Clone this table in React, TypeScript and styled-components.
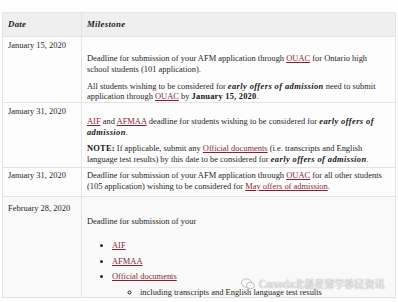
import React from "react";
import styled, { createGlobalStyle } from "styled-components";

const Global = createGlobalStyle`
  html, body { margin: 0; padding: 0; background: #fefefe; }
  body { width: 398px; height: 302px; overflow: hidden; font-family: "Liberation Serif", serif; color: #262626; }
`;

const Page = styled.div`
  position: relative;
  padding: 12px 2px 0 2px;
  width: 398px;
  height: 302px;
  box-sizing: border-box;
  overflow: hidden;
`;

const Table = styled.table`
  width: 394px;
  border-collapse: collapse;
  font-family: "Liberation Serif", serif;
  font-size: 8.45px;
  line-height: 10.5px;
  color: #262626;
  table-layout: fixed;
`;

const HeadCell = styled.th<{ $w?: number }>`
  background: #efefef;
  text-align: left;
  font-weight: 700;
  font-style: italic;
  font-size: 8.8px;
  letter-spacing: 0.3px;
  color: #1a1a1a;
  padding: 0 5px;
  height: 24px;
  box-sizing: border-box;
  border: 1px solid #e4e4e4;
  ${(p) => (p.$w ? `width: ${p.$w}px;` : "")}
`;

const Row = styled.tr<{ $shade?: boolean }>`
  background: ${(p) => (p.$shade ? "#f9f9f9" : "#fdfdfd")};
`;

const DateCell = styled.td<{ $top?: number }>`
  vertical-align: top;
  padding: ${(p) => p.$top ?? 3}px 5px 0 5px;
  border: 1px solid #e4e4e4;
  white-space: nowrap;
`;

const MileCell = styled.td<{ $bottom?: number }>`
  vertical-align: top;
  padding: 3px 5px ${(p) => p.$bottom ?? 0}px 5px;
  border: 1px solid #e4e4e4;
`;

const Para = styled.p<{ $top?: number }>`
  margin: ${(p) => p.$top ?? 0}px 0 0 0;
`;

const Emph = styled.b`
  font-style: italic;
  letter-spacing: 0.4px;
  color: #161616;
`;

const Strong = styled.b`
  letter-spacing: 0.2px;
  color: #161616;
`;

const Link = styled.a`
  color: #8a1f33;
  text-decoration: underline;
`;

const List = styled.ul<{ $nested?: boolean }>`
  margin: ${(p) => (p.$nested ? "5px 0 0 0" : "13.5px 0 0 0")};
  padding-left: ${(p) => (p.$nested ? "28px" : "25px")};
  list-style-type: ${(p) => (p.$nested ? "circle" : "disc")};
`;

const Item = styled.li<{ $first?: boolean }>`
  margin-top: ${(p) => (p.$first ? 0 : 5)}px;
`;

const Watermark = styled.div`
  position: absolute;
  left: 241px;
  top: 276px;
  display: flex;
  align-items: center;
  gap: 4px;
  font-family: "Noto Sans CJK SC", "Noto Sans", sans-serif;
  font-size: 10px;
  color: #f4f4f4;
  text-shadow: 0 0 1px #6a6a6a;
  white-space: nowrap;
`;

export default function App() {
  return (
    <>
      <Global />
      <Page>
        <Table>
          <thead>
            <tr>
              <HeadCell $w={79}>Date</HeadCell>
              <HeadCell>Milestone</HeadCell>
            </tr>
          </thead>
          <tbody>
            <Row>
              <DateCell>January 15, 2020</DateCell>
              <MileCell>
                <Para $top={13}>
                  Deadline for submission of your AFM application through <Link>OUAC</Link> for Ontario high school students (101 application).
                </Para>
                <Para $top={6.5}>
                  All students wishing to be considered for <Emph>early offers of admission</Emph> need to submit application through <Link>OUAC</Link> by <Strong>January 15, 2020</Strong>.
                </Para>
              </MileCell>
            </Row>
            <Row>
              <DateCell $top={3.5}>January 31, 2020</DateCell>
              <MileCell $bottom={3}>
                <Para $top={10.5}>
                  <Link>AIF</Link> and <Link>AFMAA</Link> deadline for students wishing to be considered for <Emph>early offers of admission</Emph>.
                </Para>
                <Para $top={6}>
                  <Strong>NOTE:</Strong> If applicable, submit any <Link>Official documents</Link> (i.e. transcripts and English language test results) by this date to be considered for <Emph>early offers of admission</Emph>.
                </Para>
              </MileCell>
            </Row>
            <Row>
              <DateCell $top={2}>January 31, 2020</DateCell>
              <MileCell $bottom={5}>
                <Para $top={-1}>
                  Deadline for submission of your AFM application through <Link>OUAC</Link> for all other students (105 application) wishing to be considered for <Link>May offers of admission</Link>.
                </Para>
              </MileCell>
            </Row>
            <Row $shade>
              <DateCell $top={6}>February 28, 2020</DateCell>
              <MileCell>
                <Para $top={16}>Deadline for submission of your</Para>
                <List>
                  <Item $first><Link>AIF</Link></Item>
                  <Item><Link>AFMAA</Link></Item>
                  <Item>
                    <Link>Official documents</Link>
                    <List $nested>
                      <Item $first>including transcripts and English language test results</Item>
                    </List>
                  </Item>
                </List>
              </MileCell>
            </Row>
          </tbody>
        </Table>
        <Watermark>
          <svg width="14" height="12" viewBox="0 0 14 12">
            <ellipse cx="5.5" cy="5" rx="5" ry="4.2" fill="#fafafa" stroke="#999" strokeWidth="0.6" />
            <ellipse cx="9.5" cy="7.5" rx="4" ry="3.3" fill="#fafafa" stroke="#999" strokeWidth="0.6" />
          </svg>
          <span>Canada北极星留学移民资讯</span>
        </Watermark>
      </Page>
    </>
  );
}
